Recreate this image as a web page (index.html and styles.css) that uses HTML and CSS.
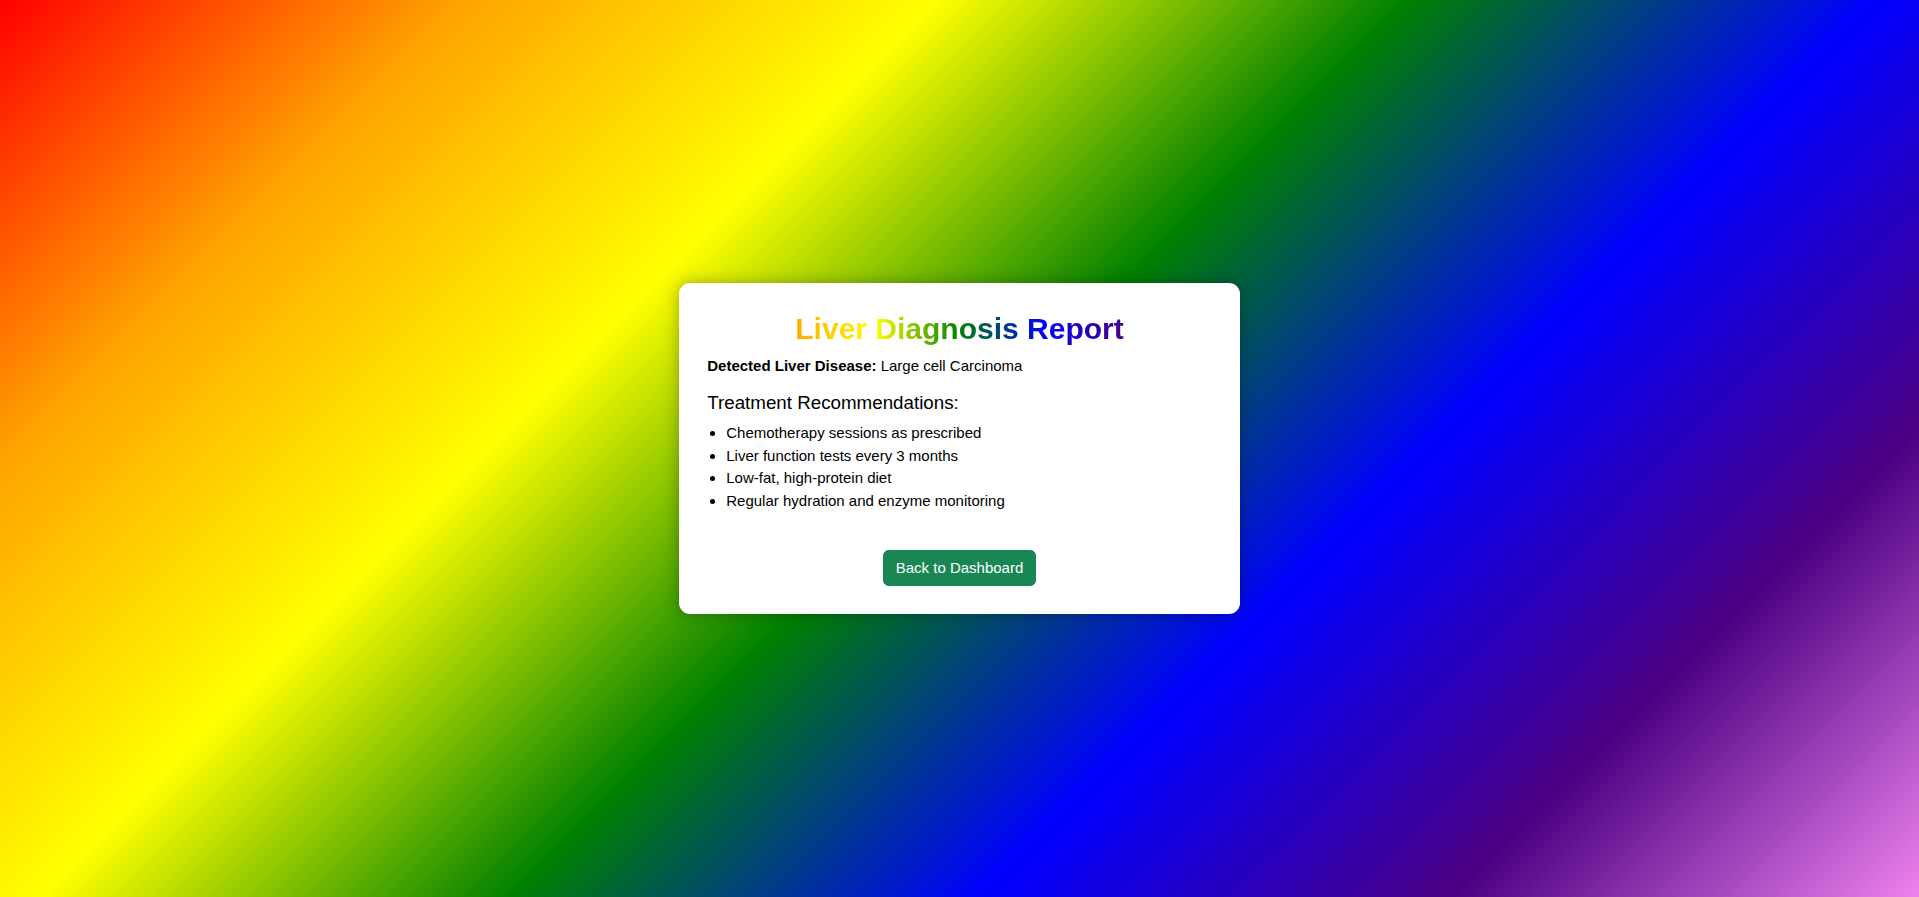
FILE: index.html
```html
<!DOCTYPE html>
<html lang="en">
<head>
<meta charset="utf-8">
<title>Liver Diagnosis Report</title>
<link rel="stylesheet" href="styles.css">
</head>
<body>
  <main class="page">
    <section class="card">
      <h1 class="title">Liver Diagnosis Report</h1>
      <p class="result"><strong>Detected Liver Disease:</strong> Large cell Carcinoma</p>
      <h5 class="subtitle">Treatment Recommendations:</h5>
      <ul class="recs">
        <li>Chemotherapy sessions as prescribed</li>
        <li>Liver function tests every 3 months</li>
        <li>Low-fat, high-protein diet</li>
        <li>Regular hydration and enzyme monitoring</li>
      </ul>
      <div class="actions">
        <a class="btn" href="#">Back to Dashboard</a>
      </div>
    </section>
  </main>
</body>
</html>
```
FILE: styles.css
```css
* { box-sizing: border-box; }

html, body {
  margin: 0;
  padding: 0;
  height: 100%;
}

body {
  font-family: "Liberation Sans", Arial, sans-serif;
  font-size: 15px;
  line-height: 1.5;
  color: #000;
  background: linear-gradient(135deg, red, orange, yellow, green, blue, indigo, violet);
  background-attachment: fixed;
}

.page {
  min-height: 100vh;
  display: flex;
  align-items: center;
  justify-content: center;
}

.card {
  display: flex;
  flex-direction: column;
  width: 561.5px;
  background: #fff;
  border-radius: 11px;
  padding: 28px 28.5px 28px;
  box-shadow: 0 0 16px rgba(0, 0, 0, 0.3);
}

.title {
  margin: 0 0 7.5px;
  font-size: 30px;
  line-height: 36px;
  font-weight: 700;
  text-align: center;
  background: linear-gradient(to right, red, orange, yellow, green, blue, indigo, violet);
  -webkit-background-clip: text;
  background-clip: text;
  color: transparent;
}

.result {
  margin: 0 0 15px;
}

.subtitle {
  margin: 0 0 7.5px;
  font-size: 18.75px;
  line-height: 22.5px;
  font-weight: 400;
}

.recs {
  margin: 0 0 15px;
  padding-left: 19px;
}

.actions {
  display: flex;
  justify-content: center;
  margin-top: 22.5px;
}

.btn {
  display: inline-block;
  padding: 5.6px 11.25px;
  border: 1px solid #198754;
  border-radius: 5.6px;
  background: #198754;
  color: #fff;
  font-size: 15px;
  line-height: 22.5px;
  text-decoration: none;
}
```
